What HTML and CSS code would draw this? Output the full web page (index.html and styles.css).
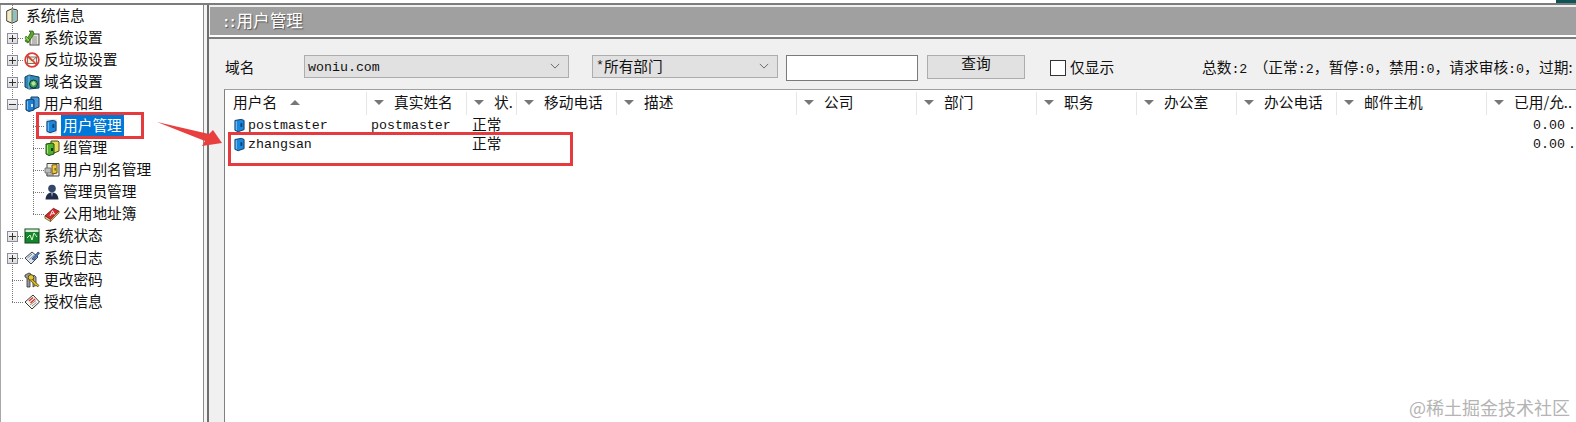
FILE: index.html
```html
<!DOCTYPE html>
<html lang="zh-CN">
<head>
<meta charset="utf-8">
<title>用户管理</title>
<link rel="stylesheet" href="styles.css">
</head>
<body>
<svg class="sprite" aria-hidden="true">
  <symbol id="i-root" viewBox="0 0 12 16">
    <path d="M.8 3 L6 .8 L11.200 2 V13 L6 15.200 L.8 13 Z" fill="#f6f0c4" stroke="#2c2c2c" stroke-width="1"/>
    <path d="M1.500 3.500 L6 2 V14 L1.500 12.500 Z" fill="#f2ecc0"/>
    <path d="M6 2 L10.500 2.500 V12.500 L6 14 Z" fill="#8fc0bc"/>
    <path d="M6 2 V14" stroke="#555" stroke-width=".8"/>
  </symbol>
  <symbol id="i-settings" viewBox="0 0 16 16">
    <rect x="6" y="4" width="9" height="11" fill="#e8e8e0" stroke="#444"/>
    <path d="M8 7h5M8 9h5M8 11h5M8 13h5" stroke="#777" stroke-width=".8"/>
    <path d="M1 11 L7 3 L5 1 L9 1 L10 4 L4 13 Z" fill="#5fa830" stroke="#2c5f12" stroke-width=".8"/>
    <path d="M2 6 L6 10 L4 12 L1 8 Z" fill="#8acc4a" stroke="#2c5f12" stroke-width=".7"/>
  </symbol>
  <symbol id="i-spam" viewBox="0 0 16 16">
    <rect x="3.500" y="5" width="9" height="6.500" fill="#f5efc8" stroke="#555" stroke-width=".8"/>
    <path d="M3.500 5 L8 9 L12.500 5" fill="none" stroke="#555" stroke-width=".8"/>
    <circle cx="8" cy="8" r="6.800" fill="none" stroke="#e23a32" stroke-width="1.800"/>
    <path d="M3.300 3.300 L12.700 12.700" stroke="#e23a32" stroke-width="1.600"/>
  </symbol>
  <symbol id="i-domain" viewBox="0 0 16 16">
    <path d="M1 3 L5 1 L15 3 V14 L5 15 L1 13 Z" fill="#2f88b8" stroke="#123f5c"/>
    <path d="M5 1.500 V15" stroke="#7fc4e0"/>
    <circle cx="9.500" cy="10" r="4" fill="#3aa05a" stroke="#0e3c2a"/>
    <path d="M7 9 L10 7 L12 10 L9 12 Z" fill="#b8e0a0"/>
  </symbol>
  <symbol id="i-users" viewBox="0 0 16 16">
    <path d="M7 1 L14 1 L15 2 V11 L10 13 L7 12 Z" fill="#4a9ad8" stroke="#123a66"/>
    <path d="M2 4 L8 3 L10 4 V14 L5 15.500 L2 14 Z" fill="#1f7fd0" stroke="#123a66"/>
    <path d="M7 8 h2 v3 h-2 Z" fill="#bfe4ff"/>
    <path d="M3.500 5 V13.500" stroke="#7cc0f0"/>
  </symbol>
  <symbol id="i-user" viewBox="0 0 12 15">
    <path d="M1 2 L8 .8 L11 2 V12 L4.500 14.300 L1 12.800 Z" fill="#1a86dc" stroke="#123a66"/>
    <path d="M2.500 2.800 V12.500" stroke="#8accf5"/>
    <path d="M7 5 h2 v4 h-2 Z" fill="#0d3f70"/>
  </symbol>
  <symbol id="i-group" viewBox="0 0 16 16">
    <path d="M7 1 L14 1 L15 2 V11 L10 13 L7 12 Z" fill="#e6dc58" stroke="#4a4a14"/>
    <path d="M2 4 L8 3 L10 4 V14 L5 15.500 L2 14 Z" fill="#52b030" stroke="#1e4c10"/>
    <path d="M7 8 h2 v3 h-2 Z" fill="#123a08"/>
    <path d="M3.500 5 V13.500" stroke="#a8e080"/>
  </symbol>
  <symbol id="i-alias" viewBox="0 0 16 16">
    <path d="M3 1.500 H15 V14 H3 Z" fill="#f0eee6" stroke="#444"/>
    <path d="M1 6 H7 V11 H1 Z" fill="#bbb" stroke="#666" stroke-width=".8"/>
    <path d="M8 3 L13 2.500 V11 L8 12 Z" fill="#f0c840" stroke="#6a5210"/>
    <path d="M10.500 6 h1.300 v2.500 h-1.300 Z" fill="#6a5210"/>
    <path d="M2 13 h8" stroke="#666"/>
  </symbol>
  <symbol id="i-admin" viewBox="0 0 16 16">
    <circle cx="8" cy="4.500" r="3.800" fill="#34466a"/>
    <path d="M1.500 15.500 C2 10 5 8.500 8 8.500 C11 8.500 14 10 14.500 15.500 Z" fill="#1e2c48"/>
    <path d="M7 9 L8 13 L9 9 Z" fill="#8ea4c8"/>
  </symbol>
  <symbol id="i-book" viewBox="0 0 17 16">
    <path d="M1 10 L10 2 L16 5 L7 14 Z" fill="#d8262c" stroke="#5c0d10" stroke-width=".8"/>
    <path d="M1 10 L7 14 V16 L1 12.500 Z" fill="#f4d89c" stroke="#5c3a10" stroke-width=".8"/>
    <path d="M7 14 L16 5 V7 L7 15.800 Z" fill="#e8c080" stroke="#5c3a10" stroke-width=".7"/>
    <path d="M6.500 10 L9 4.500 L11.500 8.500 M7.800 8 L10.500 7.500" fill="none" stroke="#fff" stroke-width="1"/>
  </symbol>
  <symbol id="i-status" viewBox="0 0 16 16">
    <rect x="1" y="1" width="14" height="14" fill="#15862e" stroke="#0c4416"/>
    <path d="M1.500 1.500 H14.500 V4 H1.500 Z" fill="#d8ead8"/>
    <path d="M3 10 L6 7 L8 12 L10 5 L13 9" fill="none" stroke="#d8f8c8" stroke-width="1"/>
  </symbol>
  <symbol id="i-log" viewBox="0 0 16 16">
    <path d="M1 8 L8 2 L14 7 L7 14 Z" fill="#dfe6ee" stroke="#3c4450"/>
    <path d="M3.500 8 L8 4 M5.500 9.500 L10 5.500" stroke="#7f8a98"/>
    <path d="M8 9 L14 2 L15.500 3 L10 10 Z" fill="#4a7cc0" stroke="#1e3a66" stroke-width=".7"/>
  </symbol>
  <symbol id="i-key" viewBox="0 0 16 16">
    <path d="M1 3 L5 1 L7 2 V5 L6 6 V15 L3 15 V6 L1 5 Z" fill="#9a9a9a" stroke="#333" stroke-width=".8"/>
    <path d="M8 5 L10 3 L12 5 V13 L9 15 V7 Z" fill="#aaa" stroke="#333" stroke-width=".8"/>
    <circle cx="7" cy="5.500" r="2.800" fill="#e4c832" stroke="#5c4e08"/>
    <path d="M8.500 7.500 L15 13.500 L13.500 15 L12.500 13.500 L11.500 14 L7 9" fill="#d8b820" stroke="#5c4e08" stroke-width=".8"/>
  </symbol>
  <symbol id="i-license" viewBox="0 0 16 16">
    <path d="M1 8 L9 1 L15.500 8 L8 15 Z" fill="#fbf7ee" stroke="#333"/>
    <path d="M5 7 L9 3.500 M6.500 9 L11 5" stroke="#d8342a" stroke-width="1.400"/>
    <path d="M6 11 L12 6.500 M8 12 L12.500 8.500" stroke="#777" stroke-width=".8"/>
  </symbol>
  <symbol id="i-chev" viewBox="0 0 12 7">
    <path d="M1 1 L6 6 L11 1" fill="none" stroke="#555" stroke-width="1"/>
  </symbol>
</svg>

<div class="app">
  <div class="topstrip"><span class="corner"></span></div>
  <div class="frames">
    <nav class="tree">
      <div class="row root"><span class="a rootcell"><svg class="ic-root"><use href="#i-root"/></svg></span><span class="label top">系统信息</span></div>

      <div class="row"><span class="a tee"><span class="box plus"></span></span><svg class="ic"><use href="#i-settings"/></svg><span class="label">系统设置</span></div>
      <div class="row"><span class="a tee"><span class="box plus"></span></span><svg class="ic"><use href="#i-spam"/></svg><span class="label">反垃圾设置</span></div>
      <div class="row"><span class="a tee"><span class="box plus"></span></span><svg class="ic"><use href="#i-domain"/></svg><span class="label">域名设置</span></div>
      <div class="row"><span class="a tee"><span class="box minus"></span></span><svg class="ic"><use href="#i-users"/></svg><span class="label">用户和组</span></div>

      <div class="row"><span class="a"></span><span class="b"></span><svg class="ic-user"><use href="#i-user"/></svg><span class="label sub selected">用户管理</span></div>
      <div class="row"><span class="a"></span><span class="b"></span><svg class="ic sub-ic"><use href="#i-group"/></svg><span class="label sub">组管理</span></div>
      <div class="row"><span class="a"></span><span class="b"></span><svg class="ic sub-ic"><use href="#i-alias"/></svg><span class="label sub">用户别名管理</span></div>
      <div class="row"><span class="a"></span><span class="b"></span><svg class="ic sub-ic"><use href="#i-admin"/></svg><span class="label sub">管理员管理</span></div>
      <div class="row"><span class="a"></span><span class="b end"></span><svg class="ic sub-ic"><use href="#i-book"/></svg><span class="label sub">公用地址簿</span></div>

      <div class="row"><span class="a tee"><span class="box plus"></span></span><svg class="ic"><use href="#i-status"/></svg><span class="label">系统状态</span></div>
      <div class="row"><span class="a tee"><span class="box plus"></span></span><svg class="ic"><use href="#i-log"/></svg><span class="label">系统日志</span></div>
      <div class="row"><span class="a tee"></span><svg class="ic"><use href="#i-key"/></svg><span class="label">更改密码</span></div>
      <div class="row"><span class="a tee end"></span><svg class="ic"><use href="#i-license"/></svg><span class="label">授权信息</span></div>
    </nav>

    <div class="gutter"></div>

    <main class="content">
      <div class="titlewrap">
        <h1 class="title"><span class="colons">::</span> 用户管理</h1>
      </div>
      <div class="toolbar">
        <span class="domain-label">域名</span>
        <div class="select sel-domain"><span class="latin sel-text">woniu.com</span><svg class="chev"><use href="#i-chev"/></svg></div>
        <div class="select sel-dept"><span class="star">*</span>所有部门<svg class="chev"><use href="#i-chev"/></svg></div>
        <input class="search" type="text" aria-label="查询">
        <button class="query" type="button">查询</button>
        <span class="check"></span>
        <span class="only">仅显示</span>
        <span class="stats">总数<span class="latin">:2</span> <span class="paren">（</span>正常<span class="latin">:2</span>， 暂停<span class="latin">:0</span>， 禁用<span class="latin">:0</span>， 请求审核<span class="latin">:0</span>， 过期:</span>
      </div>
      <section class="list">
        <div class="cols head">
          <div class="th first">用户名<span class="up"></span></div>
          <div class="th"><span class="down"></span>真实姓名</div>
          <div class="th"><span class="down"></span>状.</div>
          <div class="th"><span class="down"></span>移动电话</div>
          <div class="th"><span class="down"></span>描述</div>
          <div class="th"><span class="down"></span>公司</div>
          <div class="th"><span class="down"></span>部门</div>
          <div class="th"><span class="down"></span>职务</div>
          <div class="th"><span class="down"></span>办公室</div>
          <div class="th"><span class="down"></span>办公电话</div>
          <div class="th"><span class="down"></span>邮件主机</div>
          <div class="th"><span class="down"></span>已用/允..</div>
        </div>
        <div class="cols tr">
          <div class="td first"><svg class="ic-user"><use href="#i-user"/></svg><span class="latin">postmaster</span></div>
          <div class="td name"><span class="latin">postmaster</span></div>
          <div class="td state">正常</div>
          <div class="td wide"></div>
          <div class="td used"><span class="latin">0.00 .</span></div>
        </div>
        <div class="cols tr">
          <div class="td first"><svg class="ic-user"><use href="#i-user"/></svg><span class="latin">zhangsan</span></div>
          <div class="td name"></div>
          <div class="td state">正常</div>
          <div class="td wide"></div>
          <div class="td used"><span class="latin">0.00 .</span></div>
        </div>
      </section>
    </main>
  </div>

  <div class="redbox box-nav"></div>
  <div class="redbox box-row"></div>
  <svg class="arrow" viewBox="0 0 70 30"><polygon points="1,1 53,13 57,9 66,22 46,25 49,20" fill="#e8403f"/></svg>
  <div class="watermark">@稀土掘金技术社区</div>
</div>
</body>
</html>
```

FILE: styles.css
```css
* { box-sizing: border-box; }
html, body { margin: 0; padding: 0; }
body {
  width: 1576px;
  height: 422px;
  overflow: hidden;
  background: #fff;
  color: #111;
  font-family: "Noto Sans CJK SC", "Liberation Sans", sans-serif;
  font-size: 14.7px;
}
.sprite { display: none; }
.latin { font-family: "Liberation Mono", "DejaVu Sans Mono", monospace; font-size: 13.3px; }

.app { position: relative; width: 1576px; height: 422px; display: flex; flex-direction: column; overflow: hidden; }
.topstrip { height: 3px; display: flex; justify-content: flex-end; flex: none; }
.corner { width: 20px; background: #0d5358; }

.frames { flex: 1; display: flex; min-height: 0; border-top: 2px solid #7c7c7c; }

/* tree */
.tree { width: 204px; flex: none; background: #fff; border-left: 1px solid #a8a8a8; border-right: 1px solid #8c8c8c; }
.row { height: 22px; display: flex; align-items: center; white-space: nowrap; }
.a, .b {
  flex: none;
  height: 22px;
  display: flex;
  align-items: center;
  background-repeat: no-repeat;
}
.a {
  width: 22px;
  padding-left: 6px;
  background-image: repeating-linear-gradient(to bottom, #777 0 1px, transparent 1px 2px);
  background-size: 1px 100%;
  background-position: 11px 0;
}
.a.tee {
  background-image:
    repeating-linear-gradient(to bottom, #777 0 1px, transparent 1px 2px),
    repeating-linear-gradient(to right, #777 0 1px, transparent 1px 2px);
  background-size: 1px 100%, 11px 1px;
  background-position: 11px 0, 11px 11px;
}
.a.tee.end { background-size: 1px 11px, 11px 1px; }
.a.rootcell { padding-left: 5px; width: 25px; background-position: 11px 0; }
.b {
  width: 21px;
  background-image:
    repeating-linear-gradient(to bottom, #777 0 1px, transparent 1px 2px),
    repeating-linear-gradient(to right, #777 0 1px, transparent 1px 2px);
  background-size: 1px 100%, 11px 1px;
  background-position: 10px 0, 10px 11px;
}
.b.end { background-size: 1px 11px, 11px 1px; }

.box {
  width: 11px;
  height: 11px;
  border: 1px solid #8c8c9c;
  background:
    linear-gradient(#333, #333) center / 7px 1px no-repeat,
    linear-gradient(#f4f4f4, #dcdcdc);
}
.box.plus {
  background:
    linear-gradient(#333, #333) center / 7px 1px no-repeat,
    linear-gradient(#333, #333) center / 1px 7px no-repeat,
    linear-gradient(#f4f4f4, #dcdcdc);
}
.ic { width: 16px; height: 16px; flex: none; margin-left: 1px; }
.ic-root { width: 12px; height: 16px; flex: none; background: #fff; }
.ic-user { width: 11px; height: 15px; flex: none; }
.row .ic-user { margin-left: 2px; margin-right: 4px; background: #e8eef4; }
.sub-ic { margin-left: 0; }
.label { margin-left: 4px; height: 22px; line-height: 20px; }
.label.top { margin-left: 0; }
.label.sub { margin-left: 1px; padding: 0 2px; }
.label.selected { margin-left: 0; background: #0078d7; color: #fff; }

.gutter { width: 3px; flex: none; background: #f4f4f4; }

/* content */
.content { flex: 1; min-width: 0; display: flex; flex-direction: column; background: #f0f0f0; border-left: 2px solid #6e6e6e; }
.titlewrap { flex: none; height: 34px; padding: 2px 0 0 1px; background: #f0f0f0; border-bottom: 2px solid #7c7c7c; box-shadow: inset 0 -2px 0 #fff; }
.title {
  margin: 0;
  height: 28px;
  background: #a0a0a0;
  color: #fff;
  font-size: 16.6px;
  font-weight: 400;
  line-height: 26px;
  padding-left: 12px;
  text-shadow: 1px 1px 1px #555;
}
.colons { font-family: "Liberation Mono", monospace; font-size: 14px; font-weight: 700; letter-spacing: -2px; margin-right: -2px; }

.toolbar { height: 50px; flex: none; display: flex; align-items: center; white-space: nowrap; overflow: hidden; padding: 14px 0 6px 16px; }
.domain-label { width: 79px; flex: none; padding-bottom: 4px; }
.select {
  height: 23px;
  background: #e1e1e1;
  border: 1px solid #adadad;
  display: flex;
  align-items: center;
  justify-content: flex-start;
  padding: 0 0 1px 3px;
  flex: none;
  margin-top: -3px;
  line-height: 20px;
}
.sel-text { padding-top: 3px; }
.sel-domain { width: 265px; margin-right: 23px; }
.sel-dept { width: 186px; margin-right: 8px; }
.chev { width: 10px; height: 6px; margin-left: auto; margin-right: 8px; }
.star { font-family: "Liberation Mono", monospace; font-size: 13.3px; }
.search { width: 132px; height: 26px; flex: none; background: #fff; border: 1px solid #7a7a7a; margin: 0 9px 0 0; padding: 0; }
.query {
  width: 98px;
  height: 24px;
  flex: none;
  margin: -3px 25px 0 0;
  padding: 0 0 8px;
  background: #e1e1e1;
  border: 1px solid #adadad;
  font: inherit;
  line-height: 14px;
  color: inherit;
}
.check { width: 16px; height: 16px; flex: none; background: #fff; border: 1px solid #333; margin-right: 4px; }
.only { width: 132px; flex: none; padding-bottom: 4px; }
.stats { flex: none; padding-bottom: 4px; text-spacing-trim: space-all; word-spacing: -3px; }
.paren { margin-left: 6px; }

.list { flex: 1; margin-left: 15px; background: #fff; border-top: 1px solid #a0a0a0; border-left: 1px solid #808080; min-height: 0; overflow: hidden; padding-top: 2px; }
.cols {
  display: grid;
  grid-template-columns: 141px 100px 50px 100px 180px 120px 120px 100px 100px 100px 150px 90px;
  white-space: nowrap;
}
.head { height: 24px; line-height: 20px; }
.th { display: flex; align-items: center; height: 23px; padding: 0 0 3px 7px; border-left: 1px solid #e6e6e6; }
.th.first { padding-left: 8px; border-left: 0; }
.down { width: 0; height: 0; flex: none; margin-right: 10px; border: 5px solid transparent; border-top: 5px solid #777; border-bottom: 0; }
.up { width: 0; height: 0; flex: none; margin-left: 13px; border: 5px solid transparent; border-bottom: 5px solid #777; border-top: 0; }
.tr { height: 19px; line-height: 19px; }
.td { display: flex; align-items: center; height: 19px; }
.td.first { padding-left: 9px; }
.td .ic-user { margin-right: 3px; }
.td.name { padding-left: 5px; }
.td.state { padding: 0 0 5px 6px; }
.td.wide { grid-column: 4 / 12; }
.td.used { padding-left: 47px; word-spacing: -5px; }

/* annotations laid over the screenshot */
.redbox { position: absolute; border: 3px solid #e53b3f; pointer-events: none; }
.box-nav { left: 36px; top: 112px; width: 108px; height: 27px; }
.box-row { left: 228px; top: 132px; width: 345px; height: 34px; }
.arrow { position: absolute; left: 156px; top: 121px; width: 70px; height: 30px; }
.watermark { position: absolute; left: 1409px; top: 395px; font-size: 18px; line-height: 24px; color: #b4b4b4; white-space: nowrap; }
```
